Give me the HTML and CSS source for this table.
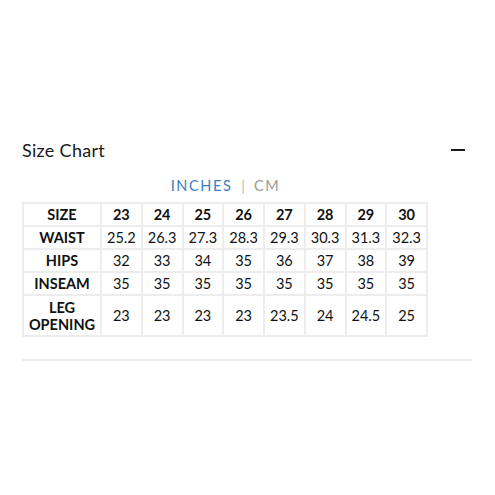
FILE: index.html
```html
<!DOCTYPE html>
<html>
<head>
<meta charset="utf-8">
<link rel="stylesheet" href="styles.css">
</head>
<body>
<section class="accordion">
  <div class="acc-head">
    <h2 class="acc-title">Size Chart</h2>
    <span class="acc-toggle"></span>
  </div>
  <div class="acc-body">
    <div class="units">
      <span class="unit active">INCHES</span>
      <span class="sep">|</span>
      <span class="unit">CM</span>
    </div>
    <table class="chart">
      <tr class="size-row"><th>SIZE</th><td>23</td><td>24</td><td>25</td><td>26</td><td>27</td><td>28</td><td>29</td><td>30</td></tr>
      <tr><th>WAIST</th><td>25.2</td><td>26.3</td><td>27.3</td><td>28.3</td><td>29.3</td><td>30.3</td><td>31.3</td><td>32.3</td></tr>
      <tr><th>HIPS</th><td>32</td><td>33</td><td>34</td><td>35</td><td>36</td><td>37</td><td>38</td><td>39</td></tr>
      <tr><th>INSEAM</th><td>35</td><td>35</td><td>35</td><td>35</td><td>35</td><td>35</td><td>35</td><td>35</td></tr>
      <tr class="tall"><th>LEG<br>OPENING</th><td>23</td><td>23</td><td>23</td><td>23</td><td>23.5</td><td>24</td><td>24.5</td><td>25</td></tr>
    </table>
  </div>
  <hr class="divider">
</section>
</body>
</html>
```
FILE: styles.css
```css
html, body {
  margin: 0;
  padding: 0;
  background: #fff;
}
body {
  font-family: Lato, "Noto Sans", sans-serif;
  color: #111;
}
.accordion {
  margin: 0 23px 0 22px;
  padding-top: 139px;
}
.acc-head {
  display: flex;
  justify-content: space-between;
  align-items: center;
  height: 22px;
}
.acc-title {
  margin: 0;
  font-size: 18px;
  font-weight: 400;
  color: #1a1a1a;
  letter-spacing: 0.3px;
}
.acc-toggle {
  width: 14px;
  height: 2px;
  background: #1a1a1a;
  margin-right: 7px;
}
.acc-body {
  width: 406px;
  padding-top: 17px;
}
.units {
  display: flex;
  justify-content: center;
  gap: 9px;
  font-size: 14.5px;
  letter-spacing: 1.6px;
  color: #9a9a9a;
  height: 16px;
  line-height: 16px;
  padding-left: 1px;
}
.unit.active {
  color: #3a7ec2;
}
.sep {
  color: #b5b5b5;
  letter-spacing: 0;
}
.chart {
  margin-top: 8px;
  border-collapse: collapse;
  width: 406px;
  table-layout: fixed;
  font-size: 14.5px;
  color: #111;
}
.chart th, .chart td {
  border: 2px solid #ededed;
  text-align: center;
  height: 19px;
  padding: 1px 0;
  line-height: 17px;
}
.chart th {
  width: 76px;
  font-weight: 700;
}
.size-row td {
  font-weight: 700;
}
.chart tr.tall th, .chart tr.tall td {
  height: 37px;
}
.divider {
  margin: 22px 0 0;
  border: 0;
  border-top: 2px solid #ececec;
}
```
